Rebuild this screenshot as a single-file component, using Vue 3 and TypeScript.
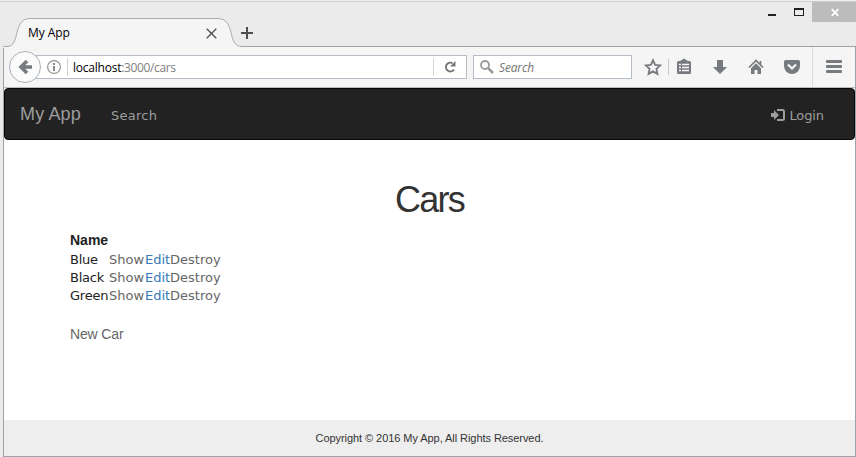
<script setup lang="ts">
interface Car {
  id: number
  name: string
}

const cars: Car[] = [
  { id: 1, name: 'Blue' },
  { id: 2, name: 'Black' },
  { id: 3, name: 'Green' },
]
</script>

<template>
  <div class="window">
    <header class="titlebar">
      <div class="tab">
        <svg class="tab-shape" width="242" height="30" viewBox="0 0 242 30">
          <path d="M0 28.500H4C18 28.500 9 0.500 27 0.500H214C234 0.500 223 28.500 239 28.500H242V30H0Z" fill="#f5f5f5" />
          <path d="M0 28.500H4C18 28.500 9 0.500 27 0.500H214C234 0.500 223 28.500 239 28.500H242" fill="none" stroke="#a3abb3" />
        </svg>
        <span class="tab-title">My App</span>
        <svg class="tab-close" width="11" height="11" viewBox="0 0 11 11">
          <path d="M.7.7l9.6 9.6M10.3.7L.7 10.3" stroke="#4d4d4d" stroke-width="1.3" />
        </svg>
      </div>
      <svg class="tab-new" width="12" height="12" viewBox="0 0 12 12">
        <path d="M0 6h12M6 0v12" stroke="#4d4d4d" stroke-width="2" />
      </svg>
      <div class="controls">
        <svg width="98" height="20" viewBox="0 0 98 20">
          <path d="M10 12h8v2h-8z" fill="#222" />
          <path fill-rule="evenodd" d="M36 6h10v8H36zM37 8v5h8V8z" fill="#222" />
          <path d="M54 0h44v20H54z" fill="#bcbcbc" />
          <path d="M73.700 7.200l6.600 6.600M80.300 7.200l-6.600 6.600" stroke="#fff" stroke-width="1.8" />
        </svg>
      </div>
    </header>

    <div class="frame">
      <div class="toolbar">
        <button class="back" aria-label="Back">
          <svg width="14" height="16" viewBox="0 0 14 16">
            <path d="M9 2L3 8l6 6M3 8h11" fill="none" stroke="#777a7f" stroke-width="3.6" />
          </svg>
        </button>
        <div class="urlbar">
          <svg class="info" width="14" height="14" viewBox="0 0 14 14">
            <circle cx="7" cy="7" r="6.4" fill="none" stroke="#909090" stroke-width="1.1" />
            <path d="M6 3h2v2H6zM6 6h2v5H6z" fill="#8a8a8a" />
          </svg>
          <div class="address"><b>localhost</b>:3000/cars</div>
          <div class="reload">
            <svg width="12" height="12" viewBox="0 0 12 12">
              <path d="M8.500 2.200A4.400 4.400 0 1 0 10 8.500" fill="none" stroke="#777" stroke-width="2" />
              <path d="M11.500 0v5.500H6z" fill="#777" />
            </svg>
          </div>
        </div>
        <div class="searchbar">
          <svg width="14" height="14" viewBox="0 0 14 14">
            <circle cx="5" cy="5" r="4" fill="none" stroke="#999" stroke-width="1.8" />
            <path d="M8 8l5 5" stroke="#999" stroke-width="2.500" />
          </svg>
          <span>Search</span>
        </div>
        <svg class="tools" width="172" height="40" viewBox="0 0 172 40">
          <path d="M13 13.200l2.150 4.600 5 .6-3.700 3.450 1 5.050L13 24.400l-4.450 2.500 1-5.050L5.850 18.400l5-.6z" fill="none" stroke="#777a7f" stroke-width="1.800" />
          <path d="M28.500 12v16" stroke="#c8c8c8" />
          <path d="M40 14l4-2.500 4 2.500h1.500a1.500 1.500 0 0 1 1.500 1.500v10a1.500 1.500 0 0 1-1.500 1.500h-11a1.500 1.500 0 0 1-1.500-1.500v-10a1.500 1.500 0 0 1 1.500-1.500z" fill="#777a7f" />
          <path d="M39 17.500h2M42 17.500h7M39 20.500h2M42 20.500h7M39 23.500h2M42 23.500h7" stroke="#f5f5f5" stroke-width="1.400" />
          <path d="M77 13h6v7h4l-7 7-7-7h4z" fill="#777a7f" />
          <path d="M109 20.500l7-7 7 7M120.500 14v4" fill="none" stroke="#777a7f" stroke-width="1.700" />
          <path d="M111 21.300l5-5 5 5V27h-3.500v-4h-3v4H111z" fill="#777a7f" />
          <path d="M145.500 13h13q1.500 0 1.500 1.500V19a8 8 0 0 1-16 0v-4.500q0-1.500 1.500-1.500z" fill="#777a7f" />
          <path d="M148 17.500l4 4 4-4" fill="none" stroke="#f5f5f5" stroke-width="2.200" />
        </svg>
        <button class="menu" aria-label="Menu"><i></i><i></i><i></i></button>
      </div>

      <main class="page">
        <nav class="navbar">
          <a class="brand">My App</a>
          <a class="nav-link">Search</a>
          <a class="nav-link login">
            <svg width="14" height="12" viewBox="0 0 14 12">
              <path d="M0 4h3V1l5 5-5 5V8H0z" fill="#9d9d9d" />
              <path d="M6 1h5.500a1.500 1.500 0 0 1 1.500 1.500v7a1.500 1.500 0 0 1-1.500 1.500H6" fill="none" stroke="#9d9d9d" stroke-width="2" />
            </svg>
            <span>Login</span>
          </a>
        </nav>
        <section class="content">
          <h1>Cars</h1>
          <table>
            <thead>
              <tr><th>Name</th><th></th><th></th><th></th></tr>
            </thead>
            <tbody>
              <tr v-for="car in cars" :key="car.id">
                <td class="name">{{ car.name }}</td>
                <td class="show">Show</td>
                <td class="edit">Edit</td>
                <td class="destroy">Destroy</td>
              </tr>
            </tbody>
          </table>
          <a class="new-car">New Car</a>
        </section>
        <footer><span>Copyright © 2016 My App, All Rights Reserved.</span></footer>
      </main>
    </div>
  </div>
</template>

<style>
body {
  margin: 0;
  overflow: hidden;
}
</style>

<style scoped>
* {
  box-sizing: border-box;
}
.window {
  width: 856px;
  height: 457px;
  display: flex;
  flex-direction: column;
  background: #ebebeb;
  border-top: 1px solid #f0f0f0;
}
.titlebar {
  height: 45px;
  flex: none;
  display: flex;
  border-top: 1px solid #cfcfcf;
  padding-left: 3px;
}
.tab {
  position: relative;
  width: 238px;
  height: 27px;
  margin-top: 16px;
  display: flex;
  align-items: center;
  padding: 1px 24px 0 25px;
  justify-content: space-between;
}
.tab-shape {
  position: absolute;
  left: 0;
  top: 0;
  z-index: 1;
}
.tab-title,
.tab-close {
  position: relative;
  z-index: 2;
}
.tab-title {
  font: 12px 'Open Sans', sans-serif;
  letter-spacing: -0.05px;
  color: #000;
}
.tab-close {
  margin-top: 2px;
}
.tab-new {
  margin-top: 25px;
}
.controls {
  margin-left: auto;
  height: 20px;
  width: 98px;
  display: flex;
}
.frame {
  flex: 1;
  margin-left: 3px;
  display: flex;
  flex-direction: column;
  border: 1px solid #9ba4ab;
  background: #fff;
}
.toolbar {
  height: 41px;
  flex: none;
  display: flex;
  align-items: center;
  background: #f5f5f5;
  border-bottom: 1px solid #bdbdbd;
  padding-left: 5px;
}
button {
  border: 0;
  padding: 0;
  margin: 0;
  background: none;
}
.back {
  width: 32px;
  height: 32px;
  flex: none;
  border: 1px solid #a8b1bb;
  border-radius: 50%;
  background: #fbfbfb;
  display: flex;
  align-items: center;
  justify-content: center;
  z-index: 1;
}
.urlbar {
  width: 431px;
  height: 24px;
  flex: none;
  margin-left: -5px;
  border: 1px solid #b5bcc5;
  background: #fff;
  display: flex;
  align-items: center;
  font: 12px 'Open Sans', sans-serif;
  color: #808080;
}
.info {
  margin-left: 10px;
}
.address {
  flex: 1;
  height: 18px;
  line-height: 20px;
  margin-left: 6px;
  padding-left: 5px;
  border-left: 1px solid #d0d0d0;
  letter-spacing: -0.38px;
}
.address b {
  font-weight: 400;
  letter-spacing: -0.22px;
  color: #000;
}
.reload {
  width: 33px;
  height: 18px;
  border-left: 1px solid #d5d5d5;
  display: flex;
  align-items: center;
  padding-left: 10px;
}
.searchbar {
  width: 159px;
  height: 24px;
  flex: none;
  margin-left: 6px;
  padding-left: 6px;
  border: 1px solid #b5bcc5;
  background: #fff;
  display: flex;
  align-items: center;
  gap: 5px;
  font: italic 12px 'Open Sans', sans-serif;
  letter-spacing: -0.15px;
  color: #737373;
}
.searchbar span {
  padding-top: 1px;
}
.tools {
  margin-left: 8px;
  flex: none;
}
.menu {
  flex: 1;
  height: 40px;
  border-left: 1px solid #dcdcdc;
  display: flex;
  flex-direction: column;
  gap: 2px;
  justify-content: center;
  padding: 0 0 1px 13px;
}
.menu i {
  width: 16px;
  height: 3px;
  border-radius: 1px;
  background: #777a7f;
}
.page {
  flex: 1;
  display: flex;
  flex-direction: column;
}
.navbar {
  height: 52px;
  flex: none;
  display: flex;
  align-items: center;
  background: #222;
  border: 1px solid #080808;
  border-radius: 4px;
  padding: 0 30px 0 15px;
  color: #9d9d9d;
}
.brand {
  width: 91px;
  font: 18px 'Liberation Sans', Arial, sans-serif;
  letter-spacing: 0.15px;
  padding-top: 1px;
  white-space: nowrap;
}
.nav-link {
  font: 13px 'DejaVu Sans', Verdana, sans-serif;
  letter-spacing: 0.25px;
  padding-top: 2px;
}
.login {
  margin-left: auto;
  display: flex;
  align-items: center;
  gap: 4px;
  letter-spacing: -0.1px;
}
.content {
  flex: 1;
  padding: 0 66px;
}
h1 {
  margin: 40px 0 0;
  text-align: center;
  font: 36px/40px 'Liberation Sans', Arial, sans-serif;
  letter-spacing: -1.8px;
  color: #333;
}
table {
  margin-top: 11px;
  border-collapse: collapse;
  table-layout: fixed;
  width: 151px;
  font: 13px/18px 'DejaVu Sans', Verdana, sans-serif;
  color: #666;
}
th,
td {
  padding: 0;
  height: 18px;
  text-align: left;
  white-space: nowrap;
}
th {
  height: 20px;
  padding-bottom: 1px;
  font: bold 14px/19px 'Liberation Sans', Arial, sans-serif;
  color: #222;
}
th:nth-child(1) {
  width: 39px;
}
th:nth-child(2) {
  width: 36px;
}
th:nth-child(3) {
  width: 25px;
}
.name {
  color: #222;
  letter-spacing: -0.25px;
}
.edit {
  color: #337ab7;
}
.new-car {
  display: block;
  margin-top: 19px;
  font: 14px/20px 'Liberation Sans', Arial, sans-serif;
  letter-spacing: -0.15px;
  color: #666;
}
footer {
  height: 36px;
  flex: none;
  background: #eee;
  text-align: center;
  font: 11px/36px 'Liberation Sans', Arial, sans-serif;
  letter-spacing: -0.06px;
  color: #333;
}
</style>
